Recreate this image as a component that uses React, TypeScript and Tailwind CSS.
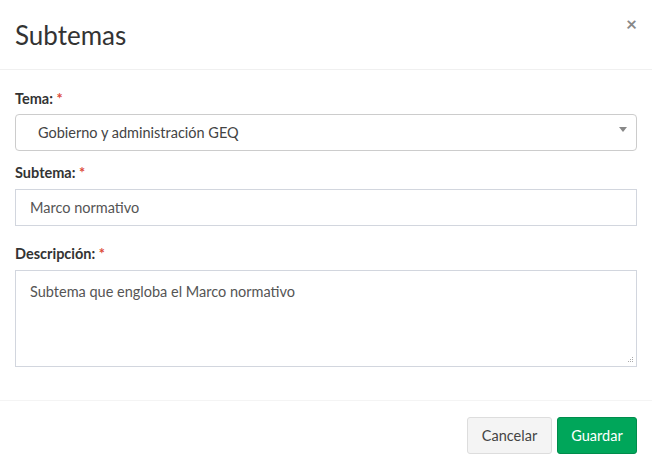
function Label({ text }: { text: string }) {
  return (
    <label className="block text-[14.5px] font-bold leading-5 text-[#333]">
      {text} <span className="text-[#dd4b39]">*</span>
    </label>
  );
}

export default function App() {
  return (
    <div
      className="h-[468px] w-[652px] bg-white text-[#333]"
      style={{ fontFamily: "Lato, 'Liberation Sans', sans-serif" }}
    >
      {/* Header */}
      <div className="flex h-[70px] items-start justify-between border-b border-[#f0f0f0] px-[15px]">
        <h4 className="pt-[19px] text-[26px] leading-8 text-[#333]">Subtemas</h4>
        <button className="pt-[14px] text-[19px] font-bold leading-5 text-[#888]">×</button>
      </div>

      {/* Body */}
      <div className="px-[15px] pt-[19px]">
        <Label text="Tema:" />
        <div className="mt-[5px] flex h-[37px] items-center justify-between rounded-[4px] border border-[#ccc] pl-[22px] pr-[8px]">
          <span className="text-[14.5px] text-[#444]">Gobierno y administración GEQ</span>
          <svg width="10" height="6" viewBox="0 0 10 6" className="mb-[6px]">
            <path d="M1 0h8L5 5z" fill="#888" />
          </svg>
        </div>

        <div className="mt-[12px]">
          <Label text="Subtema:" />
        </div>
        <div className="mt-[6px] flex h-[37px] items-center border border-[#d2d6de] px-[14px] text-[14.5px] text-[#555]">
          Marco normativo
        </div>

        <div className="mt-[18px]">
          <Label text="Descripción:" />
        </div>
        <div className="relative mt-[6px] h-[97px] border border-[#d2d6de] px-[14px] pt-[11px] text-[14.5px] leading-5 text-[#555]">
          Subtema que engloba el Marco normativo
          <svg width="7" height="7" viewBox="0 0 7 7" className="absolute bottom-[2px] right-[2px]">
            <g fill="#aaa">
              <rect x="5" y="0" width="1" height="1" />
              <rect x="3" y="2" width="1" height="1" />
              <rect x="5" y="2" width="1" height="1" />
              <rect x="1" y="4" width="1" height="1" />
              <rect x="3" y="4" width="1" height="1" />
              <rect x="5" y="4" width="1" height="1" />
            </g>
          </svg>
        </div>
      </div>

      {/* Footer */}
      <div className="mt-[33px] flex justify-end gap-[5px] border-t border-[#f4f4f4] px-[15px] pt-[16px]">
        <button className="h-[37px] w-[85px] rounded-[3px] border border-[#ddd] bg-[#f4f4f4] text-[14.5px] text-[#444]">
          Cancelar
        </button>
        <button className="h-[37px] w-[80px] rounded-[3px] border border-[#008d4c] bg-[#00a65a] text-[14.5px] text-white">
          Guardar
        </button>
      </div>
    </div>
  );
}
